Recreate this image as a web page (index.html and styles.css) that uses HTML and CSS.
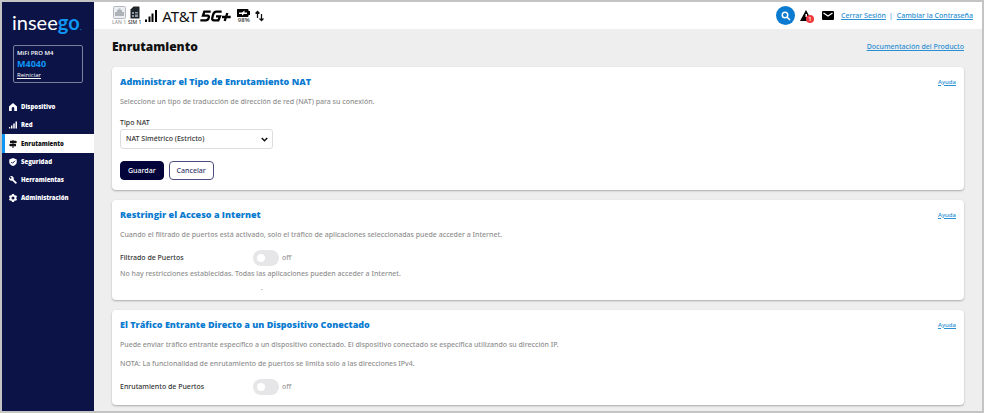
FILE: index.html
```html
<!DOCTYPE html>
<html lang="es">
<head>
<meta charset="utf-8">
<meta name="viewport" content="width=device-width, initial-scale=1">
<title>Enrutamiento</title>
<link rel="stylesheet" href="styles.css">
</head>
<body>
<div class="app">
  <aside class="sidebar">
    <div class="logo">insee<span class="logo-go">go</span><span class="logo-dot">.</span></div>
    <div class="device">
      <span class="device-name">MiFi PRO M4</span>
      <span class="device-model">M4040</span>
      <a class="device-restart" href="#">Reiniciar</a>
    </div>
    <nav class="nav">
      <a class="nav-item" href="#"><svg class="nav-icon" viewBox="0 0 16 16"><path d="M8 0 0 7v9h5.500V10.500a2.500 2.500 0 0 1 5 0V16H16V7z"/></svg>Dispositivo</a>
      <a class="nav-item" href="#"><svg class="nav-icon" viewBox="0 0 16 16"><path d="M0 12h2.500v3H0zM4 9h3v6H4zM8.500 5h3v10h-3zM13 1h3v14h-3z"/></svg>Red</a>
      <a class="nav-item active" href="#"><svg class="nav-icon" viewBox="0 0 16 16"><path d="M7 0h2v1.500h5L16 4l-2 2.500H9V8h5v4.500H9V16H7v-3.500H2L0 10.200 2 8h5V6.500H2v-5h5z"/></svg>Enrutamiento</a>
      <a class="nav-item" href="#"><svg class="nav-icon" viewBox="0 0 16 16"><path d="M8 0 15.500 3v5c0 4-3.500 7-7.500 8C4 15 .5 12 .5 8V3z"/><path class="cut" d="m4.500 8 2.500 2.500L12 5.500"/></svg>Seguridad</a>
      <a class="nav-item" href="#"><svg class="nav-icon" viewBox="0 0 16 16"><path d="M15.500 13.200 9.300 7c.8-2 .2-4-1.300-5.500C6.300-.2 4-.4 2.200.5L5.500 3.800 3.500 6 .2 2.500C-.7 4.400-.3 6.600 1.300 8.200c1.500 1.500 3.600 1.900 5.500 1.200l6.200 6.200c.3.300.7.300 1 0l1.500-1.500c.3-.2.300-.7 0-.9z"/></svg>Herramientas</a>
      <a class="nav-item" href="#"><svg class="nav-icon" viewBox="0 0 16 16"><path fill-rule="evenodd" d="M6 0h4l.5 2.200 1.500.9 2.100-.7 2 3.400L14.400 7.300v1.500l1.700 1.500-2 3.400-2.100-.7-1.500.9L10 16H6l-.5-2.100-1.500-.9-2.100.7-2-3.400 1.700-1.500V7.300L-.1 5.800l2-3.400 2.100.7 1.500-.9zM8 5a3 3 0 1 0 0 6 3 3 0 0 0 0-6z"/></svg>Administración</a>
    </nav>
  </aside>
  <div class="main">
    <header class="topbar">
      <div class="status">
        <span class="stat lan"><svg width="13" height="13" viewBox="0 0 26 26"><rect x="1" y="1" width="24" height="24" rx="2" fill="#eceef1" stroke="#b4b8bf" stroke-width="2"/><path d="M4 20v-8h4V8h3V5h4v3h3v4h4v8z" fill="#aeb2b9"/></svg><small>LAN 1</small></span>
        <span class="stat sim"><svg width="10" height="13" viewBox="0 0 20 26"><path d="M7 1h11a1 1 0 0 1 1 1v22a1 1 0 0 1-1 1H2a1 1 0 0 1-1-1V7z" fill="#20242b"/><path d="M4 12h4v4H4zM10 12h6v3h-6zM4 18h4v4H4zM10 17h6v5h-6z" fill="#8d96a1"/></svg><small>SIM 1</small></span>
        <svg class="bars" width="12" height="12" viewBox="0 0 24 24"><path d="M0 19h4v5H0zM7 13h4v11H7zM13 7h4v17h-4zM20 0h4v24h-4z"/></svg>
        <span class="carrier">AT&amp;T</span>
        <svg class="fiveg" width="32" height="12" viewBox="0 0 96 36" role="img" aria-label="5G+"><g fill="none" stroke="#000" stroke-width="7"><path d="M32 5H13L9 17h13q7 0 4 7-2 7-9 7H1"/><path d="M65 5H49q-7 0-10 10l-2 8q-2 8 5 8h13l5-12H48"/><path d="M82 9l-8 24M66 21h26"/></g></svg>
        <span class="stat battery"><svg width="13" height="8" viewBox="0 0 26 16"><path d="M1 0h20a2 2 0 0 1 2 2v2h3v8h-3v2a2 2 0 0 1-2 2H1a1 1 0 0 1-1-1V1a1 1 0 0 1 1-1z"/><path d="M4 7h6l5-4v4h5v3h-6l-4 3v-3H4z" fill="#fff"/></svg><small>98%</small></span>
        <svg class="arrows" width="9" height="12" viewBox="0 0 18 24"><path d="M5 16V3M1 7l4-4 4 4M13 8v13M9 17l4 4 4-4" fill="none" stroke="#111" stroke-width="2.500"/></svg>
      </div>
      <div class="tools">
        <button class="search" aria-label="Buscar"><svg width="10" height="10" viewBox="0 0 20 20"><circle cx="8" cy="8" r="5.500"/><path d="m12 12 6 6"/></svg></button>
        <a class="alert" href="#" aria-label="Alertas"><svg width="12" height="11" viewBox="0 0 24 22"><path d="M12 0 24 22H0z"/><path d="M11 8h3v6h-3z" fill="#fff"/></svg><span class="badge">1</span></a>
        <a class="mail" href="#" aria-label="Mensajes"><svg width="12" height="9" viewBox="0 0 24 18"><rect width="24" height="18" rx="2"/><path d="m3 4 9 6 9-6" fill="none" stroke="#fff" stroke-width="2.200"/></svg></a>
        <div class="session"><a href="#">Cerrar Sesión</a><span class="sep">|</span><a href="#">Cambiar la Contraseña</a></div>
      </div>
    </header>
    <main class="content">
      <div class="page-head"><h1>Enrutamiento</h1><a href="#">Documentación del Producto</a></div>
      <section class="card">
        <div class="card-head"><h2>Administrar el Tipo de Enrutamiento NAT</h2><a href="#">Ayuda</a></div>
        <p>Seleccione un tipo de traducción de dirección de red (NAT) para su conexión.</p>
        <label class="field-label" for="nat">Tipo NAT</label>
        <div class="select-wrap">
          <select id="nat"><option>NAT Simétrico (Estricto)</option></select>
          <svg class="chevron" width="7" height="5" viewBox="0 0 14 10"><path d="m1.500 2 5.500 5.500L12.500 2"/></svg>
        </div>
        <div class="actions"><button class="btn primary">Guardar</button><button class="btn">Cancelar</button></div>
      </section>
      <section class="card">
        <div class="card-head"><h2>Restringir el Acceso a Internet</h2><a href="#">Ayuda</a></div>
        <p>Cuando el filtrado de puertos está activado, solo el tráfico de aplicaciones seleccionadas puede acceder a Internet.</p>
        <div class="toggle-row"><label for="filter">Filtrado de Puertos</label><input class="switch" type="checkbox" id="filter"><span class="state">off</span></div>
        <p class="note">No hay restricciones establecidas. Todas las aplicaciones pueden acceder a Internet.</p>
        <p class="dot">.</p>
      </section>
      <section class="card">
        <div class="card-head"><h2>El Tráfico Entrante Directo a un Dispositivo Conectado</h2><a href="#">Ayuda</a></div>
        <p>Puede enviar tráfico entrante específico a un dispositivo conectado. El dispositivo conectado se especifica utilizando su dirección IP.</p>
        <p>NOTA: La funcionalidad de enrutamiento de puertos se limita solo a las direcciones IPv4.</p>
        <div class="toggle-row"><label for="forward">Enrutamiento de Puertos</label><input class="switch" type="checkbox" id="forward"><span class="state">off</span></div>
      </section>
    </main>
  </div>
</div>
</body>
</html>
```
FILE: styles.css
```css
* { box-sizing: border-box; }
body {
  margin: 0;
  font: 500 7px/10px "Noto Sans", "Open Sans", sans-serif;
  color: #333;
}
a { color: #2a8fd3; }
svg { display: block; flex: none; }
.app {
  display: flex;
  min-height: 100vh;
  border: 2px solid #c4c4c4;
  background: #eee;
}

.sidebar {
  flex: 0 0 92px;
  background: #0b1347;
  color: #fff;
  font-family: "Open Sans", "Noto Sans", sans-serif;
}
.logo {
  margin: 8px 0 0 10px;
  font: 20px/24px Lato, sans-serif;
  color: #fff;
}
.logo-go { font-weight: 700; color: #0f96f5; }
.logo-dot { font-size: 8px; color: #0f96f5; }
.device {
  display: flex;
  flex-direction: column;
  align-items: flex-start;
  margin: 6px 11px 0;
  padding: 2px 3px;
  border: 1px solid #7b7f9b;
  border-radius: 2px;
}
.device-name { font-size: 6px; line-height: 10px; font-weight: 600; }
.device-model { font-size: 9px; line-height: 12px; font-weight: 700; color: #0f96f5; }
.device-restart { font-size: 6px; line-height: 10px; color: #fff; }
.nav { margin-top: 15px; }
.nav-item {
  display: flex;
  align-items: center;
  gap: 4px;
  height: 18px;
  padding-left: 7px;
  font-size: 6px;
  font-weight: 800;
  color: #fff;
  text-decoration: none;
}
.nav-icon { width: 8px; height: 8px; fill: currentColor; }
.cut { fill: none; stroke: #0b1347; stroke-width: 2; }
.nav-item.active {
  height: 19px;
  padding-left: 4px;
  border-left: 3px solid #0f96f5;
  background: #fff;
  color: #111;
}

.main { flex: 1; min-width: 0; }
.topbar {
  display: flex;
  align-items: center;
  justify-content: space-between;
  height: 27px;
  padding: 0 9px 0 18px;
  background: #fff;
}
.status, .tools, .session { display: flex; align-items: center; }
.stat { display: flex; flex-direction: column; align-items: center; }
.stat small { font-size: 5px; line-height: 6px; }
.lan { color: #999; }
.sim { margin: 0 4px 0 2px; }
.carrier { margin: 0 3px 0 5px; font-size: 15px; font-weight: 400; line-height: 18px; color: #111; }
.battery { margin: 0 5px; }
.battery small { font-size: 6px; }
.search {
  display: flex;
  align-items: center;
  justify-content: center;
  width: 19px;
  height: 19px;
  padding: 0;
  border: 0;
  border-radius: 50%;
  background: #0a7bd0;
}
.search svg { fill: none; stroke: #fff; stroke-width: 3; }
.alert { position: relative; margin: 0 10px 0 5px; }
.badge {
  position: absolute;
  left: 6px;
  top: 5px;
  width: 8px;
  height: 8px;
  border-radius: 50%;
  background: #f0383f;
  color: #fff;
  font-size: 6px;
  line-height: 8px;
  text-align: center;
}
.session { margin-left: 7px; color: #2a8fd3; }
.sep { margin: 0 4px 0 3px; }

.content { padding: 10px 18px 5px; }
.page-head {
  display: flex;
  align-items: center;
  justify-content: space-between;
  margin-bottom: 12px;
}
h1, h2 { margin: 0; font-family: "Open Sans", "Noto Sans", sans-serif; font-weight: 800; }
h1 { font-size: 12px; line-height: 16px; color: #111; }
h2 { font-size: 9px; line-height: 13px; color: #0a7bd0; }
.card {
  margin-bottom: 10px;
  padding: 8px 8px 10px;
  border-radius: 4px;
  background: #fff;
  box-shadow: 0 1px 2px #aaa;
}
.card:last-child { margin-bottom: 0; }
.card-head { display: flex; align-items: center; justify-content: space-between; }
.card-head a { font-size: 6px; }
p { margin: 9px 0 0; color: #909090; }
.field-label { display: block; margin-top: 10px; line-height: 11px; }
.select-wrap { position: relative; width: 153px; margin-top: 1px; }
select {
  display: block;
  appearance: none;
  width: 100%;
  height: 20px;
  padding: 0 5px;
  border: 1px solid #ddd;
  border-radius: 3px;
  background: #fff;
  color: #333;
  font: inherit;
}
.chevron {
  position: absolute;
  right: 5px;
  top: 8px;
  fill: none;
  stroke: #111;
  stroke-width: 3;
  pointer-events: none;
}
.actions { display: flex; gap: 5px; margin-top: 12px; }
.btn {
  height: 19px;
  padding: 0 7px;
  border: 1px solid #4b4f80;
  border-radius: 4px;
  background: #fff;
  color: #34386a;
  font: inherit;
}
.primary { border-color: #02043a; background: #02043a; color: #fff; }
.toggle-row { display: flex; align-items: center; margin-top: 10px; }
.toggle-row label { width: 133px; }
.switch {
  appearance: none;
  width: 26px;
  height: 16px;
  margin: 0 3px 0 0;
  padding: 4px;
  border-radius: 8px;
  background: #e6e6e8;
}
.switch::before {
  content: "";
  display: block;
  width: 8px;
  height: 8px;
  border-radius: 50%;
  background: #fff;
}
.switch:checked::before { margin-left: auto; }
.state { color: #999; }
.note { margin-top: 3px; }
.dot { margin: 6px 0 0 141px; line-height: 5px; }
```
